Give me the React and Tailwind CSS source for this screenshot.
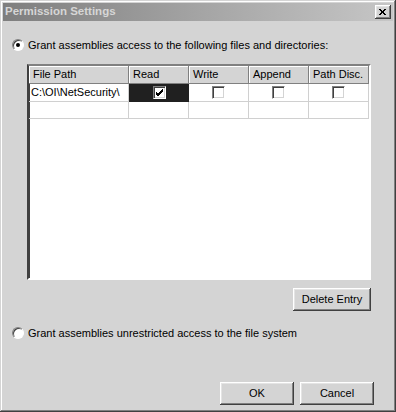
import React from "react";

const raised =
  "shadow-[inset_-1px_-1px_0_#404040,inset_1px_1px_0_#ffffff,inset_-2px_-2px_0_#808080,inset_2px_2px_0_#e4e4e4]";

const Radio = ({ checked }) => (
  <span className="relative inline-block w-[12px] h-[12px] rounded-full bg-white border border-t-[#808080] border-l-[#808080] border-b-white border-r-white shadow-[inset_1px_1px_0_#404040]">
    {checked && (
      <span className="absolute left-[3px] top-[3px] w-[4px] h-[4px] rounded-full bg-black" />
    )}
  </span>
);

const Check = ({ checked }) => (
  <span className="flex items-center justify-center w-[13px] h-[13px] bg-white border border-t-[#808080] border-l-[#808080] border-b-white border-r-[#ffffff] shadow-[inset_1px_1px_0_#404040,inset_-1px_-1px_0_#d4d4d4]">
    {checked && (
      <svg width="9" height="9" viewBox="0 0 9 9">
        <path d="M1 4 L3 6 L8 1 M1 5 L3 7 L8 2 M1 6 L3 8 L8 3" stroke="#000" strokeWidth="1" fill="none" />
      </svg>
    )}
  </span>
);

const Button = ({ children, className }) => (
  <button className={`h-[23px] bg-[#d4d4d4] text-black text-[11px] ${raised} ${className}`}>
    {children}
  </button>
);

const cols = [
  { label: "File Path", w: "w-[100px]" },
  { label: "Read", w: "w-[60px]" },
  { label: "Write", w: "w-[60px]" },
  { label: "Append", w: "w-[60px]" },
  { label: "Path Disc.", w: "w-[60px]" },
];

export default function App() {
  return (
    <div
      className="w-[396px] h-[412px] bg-[#d4d4d4] p-[3px] flex flex-col text-black text-[11px] shadow-[inset_-1px_-1px_0_#404040,inset_1px_1px_0_#d4d4d4,inset_-2px_-2px_0_#808080,inset_2px_2px_0_#ffffff]"
      style={{ fontFamily: '"Liberation Sans", Arial, sans-serif' }}
    >
      {/* title bar */}
      <div className="h-[18px] flex items-center justify-between pl-[2px] pr-[2px] bg-gradient-to-r from-[#7e7e7e] via-[#a4a4a4] to-[#c6c6c6]">
        <span className="font-bold text-[#d6d6d6] text-[11.5px]">Permission Settings</span>
        <span className={`w-[16px] h-[14px] flex items-center justify-center bg-[#d4d4d4] ${raised}`}>
          <svg width="8" height="7" viewBox="0 0 8 7">
            <path d="M0 0 L6 6 M1 0 L7 6 M6 0 L0 6 M7 0 L1 6" stroke="#000" strokeWidth="1" fill="none" />
          </svg>
        </span>
      </div>

      <div className="mt-[16px] ml-[9px] h-[16px] flex items-center gap-[4px]">
        <Radio checked />
        <span>Grant assemblies access to the following files and directories:</span>
      </div>

      {/* grid */}
      <div className="mt-[11px] ml-[24px] w-[344px] h-[216px] bg-white border-2 border-t-[#808080] border-l-[#404040] border-b-white border-r-white shadow-[inset_1px_1px_0_#404040]">
        <div className="flex h-[18px] bg-[#d4d4d4]">
          {cols.map((c) => (
            <div
              key={c.label}
              className={`${c.w} h-full pl-[4px] flex items-center border-r border-b border-r-[#808080] border-b-[#808080] shadow-[inset_1px_1px_0_#ffffff]`}
            >
              {c.label}
            </div>
          ))}
        </div>
        <div className="flex h-[18px]">
          <div className="w-[100px] pl-[2px] flex items-center border-r border-b border-[#d0d0d0]">
            C:\OI\NetSecurity\
          </div>
          <div className="w-[60px] flex items-center justify-center bg-[#202020] border-b border-[#202020]">
            <Check checked />
          </div>
          {[0, 1, 2].map((i) => (
            <div key={i} className="w-[60px] flex items-center justify-center border-r border-b border-[#d0d0d0]">
              <Check />
            </div>
          ))}
        </div>
        <div className="flex h-[17px]">
          {cols.map((c) => (
            <div key={c.label} className={`${c.w} border-r border-b border-[#d0d0d0]`} />
          ))}
        </div>
      </div>

      <div className="w-[368px] mt-[8px] flex justify-end">
        <Button className="w-[78px]">Delete Entry</Button>
      </div>

      <div className="mt-[14px] ml-[9px] h-[16px] flex items-center gap-[4px]">
        <Radio />
        <span>Grant assemblies unrestricted access to the file system</span>
      </div>

      <div className="mt-[41px] w-[371px] flex justify-end gap-[6px]">
        <Button className="w-[74px]">OK</Button>
        <Button className="w-[74px]">Cancel</Button>
      </div>
    </div>
  );
}
